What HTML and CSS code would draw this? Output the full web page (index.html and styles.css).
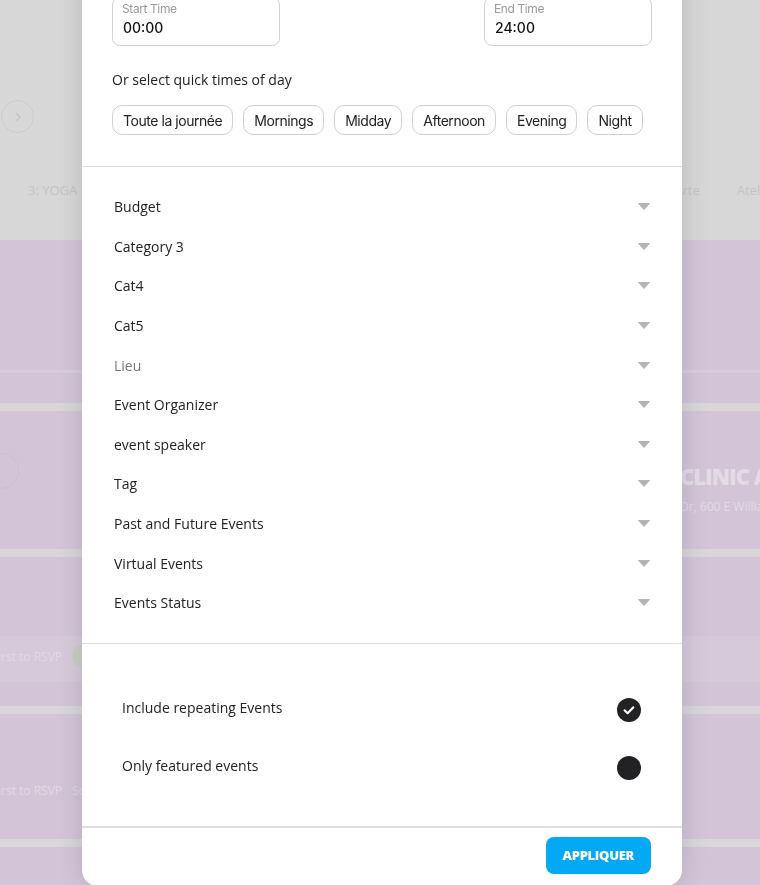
FILE: index.html
```html
<!DOCTYPE html>
<html lang="en">
<head>
    <meta charset="UTF-8">
    <meta name="viewport" content="width=device-width, initial-scale=1.0">
    <title>Event Filters</title>
    <link rel="stylesheet" href="styles.css">
</head>
<body>
    <div class="page">
        <header class="hero">
            <div class="hero-nav">
                <span class="nav-circle">
                    <svg width="14" height="14" viewBox="0 0 14 14"><path d="M5 3l4 4-4 4" fill="none" stroke="#c4c4c4" stroke-width="1.3"/></svg>
                </span>
            </div>
            <div class="tabs">
                <span class="tab">3: YOGA</span>
                <span class="tab tab-far">Arte</span>
                <span class="tab">Atelier</span>
            </div>
        </header>

        <section class="band band-top">
            <div class="faint-line"></div>
        </section>
        <div class="stripe"></div>
        <section class="band band-clinic">
            <span class="ghost-circle"></span>
            <div class="clinic">
                <div class="clinic-title">CLINIC A</div>
                <div class="clinic-addr">Dr, 600 E William St</div>
            </div>
        </section>
        <div class="stripe"></div>
        <section class="band band-rsvp">
            <div class="rsvp-card">
                <div class="rsvp-text">Be the first to RSVP</div>
                <span class="rsvp-pill"></span>
            </div>
        </section>
        <div class="stripe"></div>
        <section class="band band-rsvp2">
            <div class="rsvp-line">
                <div class="rsvp-text">Be the first to RSVP</div>
                <span class="rsvp-more">Sold</span>
            </div>
        </section>
        <div class="stripe"></div>
        <section class="band"></section>
    </div>

    <div class="overlay">
        <div class="modal">
            <div class="time-section">
                <div class="time-row">
                    <div class="time-box">
                        <span class="time-label">Start Time</span>
                        <span class="time-value">00:00</span>
                    </div>
                    <div class="time-box">
                        <span class="time-label">End Time</span>
                        <span class="time-value">24:00</span>
                    </div>
                </div>
                <p class="quick-title">Or select quick times of day</p>
                <div class="chips">
                    <button class="chip">Toute la journée</button>
                    <button class="chip">Mornings</button>
                    <button class="chip">Midday</button>
                    <button class="chip">Afternoon</button>
                    <button class="chip">Evening</button>
                    <button class="chip">Night</button>
                </div>
            </div>

            <ul class="filters">
                <li class="filter">Budget <svg class="caret" viewBox="0 0 12 7"><path d="M0.5 0.5h11L6 6.5z"/></svg></li>
                <li class="filter">Category 3 <svg class="caret" viewBox="0 0 12 7"><path d="M0.5 0.5h11L6 6.5z"/></svg></li>
                <li class="filter">Cat4 <svg class="caret" viewBox="0 0 12 7"><path d="M0.5 0.5h11L6 6.5z"/></svg></li>
                <li class="filter">Cat5 <svg class="caret" viewBox="0 0 12 7"><path d="M0.5 0.5h11L6 6.5z"/></svg></li>
                <li class="filter filter-muted">Lieu <svg class="caret" viewBox="0 0 12 7"><path d="M0.5 0.5h11L6 6.5z"/></svg></li>
                <li class="filter">Event Organizer <svg class="caret" viewBox="0 0 12 7"><path d="M0.5 0.5h11L6 6.5z"/></svg></li>
                <li class="filter">event speaker <svg class="caret" viewBox="0 0 12 7"><path d="M0.5 0.5h11L6 6.5z"/></svg></li>
                <li class="filter">Tag <svg class="caret" viewBox="0 0 12 7"><path d="M0.5 0.5h11L6 6.5z"/></svg></li>
                <li class="filter">Past and Future Events <svg class="caret" viewBox="0 0 12 7"><path d="M0.5 0.5h11L6 6.5z"/></svg></li>
                <li class="filter">Virtual Events <svg class="caret" viewBox="0 0 12 7"><path d="M0.5 0.5h11L6 6.5z"/></svg></li>
                <li class="filter">Events Status <svg class="caret" viewBox="0 0 12 7"><path d="M0.5 0.5h11L6 6.5z"/></svg></li>
            </ul>

            <div class="toggles">
                <div class="toggle-row">
                    <span>Include repeating Events</span>
                    <span class="check">
                        <svg width="24" height="24" viewBox="0 0 24 24"><path d="M7.6 12.3l3 2.9 5.6-5.8" fill="none" stroke="#fff" stroke-width="2.2" stroke-linecap="round" stroke-linejoin="round"/></svg>
                    </span>
                </div>
                <div class="toggle-row">
                    <span>Only featured events</span>
                    <span class="check"></span>
                </div>
            </div>

            <div class="modal-footer">
                <button class="apply-btn">APPLIQUER</button>
            </div>
        </div>
    </div>
</body>
</html>
```

FILE: styles.css
```css
body {
    margin: 0;
    padding: 0;
    height: 885px;
    overflow: hidden;
    font-family: "Open Sans", Arial, sans-serif;
    background: #d3c5d7;
}

/* page behind the modal */
.page {
    width: 760px;
}
.hero {
    height: 240px;
    background: #d7d7d7;
}
.hero-nav {
    padding-top: 100px;
    height: 34px;
}
.nav-circle {
    display: flex;
    align-items: center;
    justify-content: center;
    width: 33px;
    height: 33px;
    margin-left: 1px;
    border: 1px solid #cbcbcb;
    border-radius: 50%;
    box-sizing: border-box;
}
.tabs {
    display: flex;
    padding-left: 28px;
    margin-top: 47px;
    white-space: nowrap;
    font-size: 13px;
    color: #c4c4c4;
}
.tab {
    flex: none;
    margin-right: 36px;
}
.tab-far {
    margin-left: 561px;
    margin-right: 37px;
}
.band {
    background: #d3c5d7;
}
.band-top {
    height: 163px;
    display: flex;
    flex-direction: column;
    justify-content: flex-end;
}
.faint-line {
    height: 3px;
    margin-bottom: 30px;
    background: #d9cfdc;
}
.stripe {
    height: 8px;
    background: #d8d6d9;
}
.band-clinic {
    height: 138px;
    display: flex;
    align-items: center;
}
.ghost-circle {
    width: 34px;
    height: 34px;
    margin-left: -17px;
    margin-top: -18px;
    border: 1px solid #cdbfd1;
    border-radius: 50%;
}
.clinic {
    margin-left: auto;
    width: 80px;
    white-space: nowrap;
    overflow: hidden;
    padding-top: 16px;
}
.clinic-title {
    font-size: 22px;
    line-height: 28px;
    font-weight: 800;
    color: #e4dbe7;
    letter-spacing: -1px;
}
.clinic-addr {
    margin-top: 8px;
    font-size: 12px;
    color: #e4dbe7;
}
.band-rsvp {
    height: 149px;
    display: flex;
    align-items: flex-end;
}
.rsvp-card {
    display: flex;
    align-items: center;
    width: 100%;
    height: 46px;
    margin-bottom: 24px;
    background: #d6cada;
}
.rsvp-card .rsvp-text {
    margin-top: -6px;
}
.rsvp-text {
    display: flex;
    justify-content: flex-end;
    width: 62px;
    white-space: nowrap;
    font-size: 12px;
    color: #e2d9e5;
}
.rsvp-pill {
    width: 30px;
    height: 22px;
    margin-left: 10px;
    margin-top: -6px;
    border-radius: 11px;
    background: #c9cfc2;
}
.band-rsvp2 {
    height: 125px;
    display: flex;
    align-items: flex-end;
}
.rsvp-line {
    display: flex;
    align-items: center;
    height: 30px;
    margin-bottom: 34px;
}
.rsvp-more {
    margin-left: 10px;
    font-size: 12px;
    color: #e2d9e5;
}

/* modal */
.overlay {
    position: fixed;
    inset: 0;
}
.modal {
    position: absolute;
    top: -33px;
    left: 82px;
    width: 600px;
    background: #fff;
    border-radius: 0 0 16px 16px;
    box-shadow: 0 0 24px rgba(60, 40, 70, 0.18);
    color: #222;
}
.time-section {
    padding: 30px 30px 31px;
    border-bottom: 1px solid #dcdcdc;
}
.time-row {
    display: flex;
    justify-content: space-between;
}
.time-box {
    display: flex;
    flex-direction: column;
    width: 168px;
    padding: 4px 9px 7px;
    border: 1px solid #d2d2d2;
    border-radius: 8px;
    box-sizing: border-box;
    font-family: Inter, "Open Sans", sans-serif;
}
.time-label {
    font-size: 12px;
    line-height: 14px;
    color: #9a9a9a;
    letter-spacing: -0.4px;
}
.time-value {
    margin-top: 2px;
    padding-left: 1px;
    font-size: 14px;
    line-height: 20px;
    font-weight: 500;
    color: #111;
}
.quick-title {
    margin: 24px 0 15px;
    font-size: 14px;
    line-height: 20px;
}
.chips {
    display: flex;
    gap: 10px;
}
.chip {
    height: 30px;
    padding: 0 10px;
    background: #fff;
    border: 1px solid #cfcfcf;
    border-radius: 10px;
    font-family: Inter, "Open Sans", sans-serif;
    font-size: 14px;
    letter-spacing: -0.45px;
    color: #222;
}
.filters {
    list-style-type: none;
    margin: 0;
    padding: 20px 32px 20px;
    border-bottom: 1px solid #dcdcdc;
}
.filter {
    display: flex;
    align-items: center;
    justify-content: space-between;
    height: 39.6px;
    font-size: 14px;
}
.filter-muted {
    color: #777;
}
.caret {
    width: 12px;
    height: 7px;
    fill: #b4b4b4;
    stroke: #b4b4b4;
    stroke-width: 1;
    stroke-linejoin: round;
}
.toggles {
    padding: 37px 41px 29px 40px;
    border-bottom: 2px solid #dedede;
}
.toggle-row {
    display: flex;
    align-items: center;
    justify-content: space-between;
    height: 58px;
    font-size: 14px;
}
.toggle-row span:first-child {
    margin-top: -4px;
}
.check {
    width: 24px;
    height: 24px;
    border-radius: 50%;
    background: #222225;
}
.check svg {
    display: block;
}
.modal-footer {
    display: flex;
    justify-content: flex-end;
    padding: 9px 31px 12px;
}
.apply-btn {
    height: 37px;
    padding: 0 17px;
    background-color: #03a9f4;
    color: white;
    border: none;
    border-radius: 8px;
    font-family: "Open Sans", Arial, sans-serif;
    font-weight: 800;
    font-size: 13px;
    letter-spacing: -0.3px;
}
```
